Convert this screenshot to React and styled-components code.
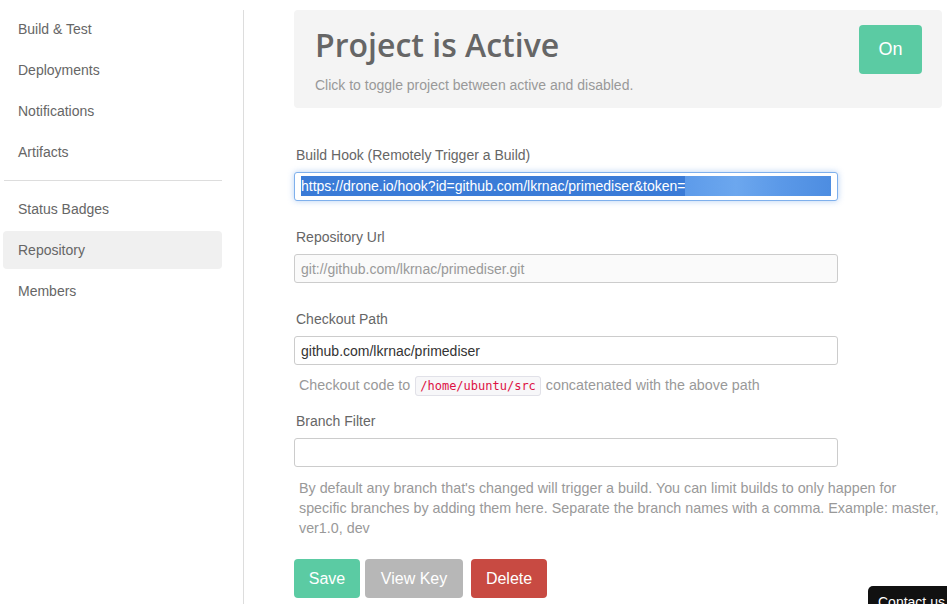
import React from "react";
import styled, { createGlobalStyle } from "styled-components";

const Global = createGlobalStyle`
  html, body { margin: 0; padding: 0; background: #fff; }
  body {
    font-family: "Liberation Sans", Arial, sans-serif;
    font-size: 14px;
    color: #666;
    overflow: hidden;
  }
  * { box-sizing: border-box; }
`;

const Layout = styled.div`
  display: flex;
  align-items: stretch;
  min-height: 604px;
`;

const Sidebar = styled.nav`
  width: 244px;
  flex: none;
  padding: 10px 21px 0 3px;
  border-right: 1px solid #ddd;
  margin-top: 10px;
  margin-bottom: -40px;
  display: flex;
  flex-direction: column;
`;

const NavGroup = styled.ul`
  list-style: none;
  margin: 0;
  padding: 0;
  display: flex;
  flex-direction: column;
  gap: 3px;
`;

const NavItem = styled.li`
  height: 38px;
  line-height: 38px;
  padding-left: 15px;
  border-radius: 4px;
  font-size: 14px;
  color: #666;
  margin-top: ${(p) => (p.$first ? "-10px" : "0")};
  background: ${(p) => (p.$active ? "#f0f0f0" : "transparent")};
`;

const Divider = styled.hr`
  border: 0;
  border-top: 1px solid #ddd;
  margin: 9px 0 9px 1px;
`;

const Main = styled.main`
  flex: 1;
  padding: 10px 5px 0 50px;
  display: flex;
  flex-direction: column;
`;

const Banner = styled.section`
  background: #f4f4f4;
  border-radius: 4px;
  height: 98px;
  padding: 15px 20px 0 21px;
  display: flex;
  justify-content: space-between;
  align-items: flex-start;
`;

const BannerText = styled.div`
  display: flex;
  flex-direction: column;
`;

const Title = styled.h1`
  margin: 0;
  font-family: "Open Sans", sans-serif;
  font-weight: 600;
  font-size: 32px;
  line-height: 40px;
  color: #666;
`;

const Subtitle = styled.p`
  margin: 12px 0 0;
  font-size: 14px;
  color: #999;
`;

const Toggle = styled.button`
  width: 63px;
  height: 49px;
  border: 0;
  border-radius: 4px;
  background: #5bcba3;
  color: #fff;
  font-family: "Liberation Sans", Arial, sans-serif;
  font-size: 18px;
`;

const Form = styled.form`
  display: flex;
  flex-direction: column;
  margin-top: 38px;
`;

const Field = styled.div`
  display: flex;
  flex-direction: column;
  margin-bottom: ${(p) => p.$gap || "27px"};
`;

const Label = styled.label`
  font-size: 14px;
  color: #666;
  line-height: 16px;
  padding: 1px 0 0 2px;
  margin-bottom: 9px;
`;

const Input = styled.input`
  width: 544px;
  height: 29px;
  border: 1px solid #ccc;
  border-radius: 3px;
  padding: 0 6px;
  font-family: "Liberation Sans", Arial, sans-serif;
  font-size: 14px;
  color: #333;
  background: ${(p) => (p.disabled ? "#fafafa" : "#fff")};
  &:disabled { color: #999; }
  outline: none;
`;

const FocusedBox = styled.div`
  width: 544px;
  height: 29px;
  border: 1px solid #7fb0ec;
  border-radius: 3px;
  padding: 3px 6px 0;
  box-shadow: 0 0 6px rgba(90, 150, 230, 0.45);
  background: #fff;
  font-size: 14px;
  white-space: nowrap;
  overflow: hidden;
  display: flex;
`;

const Selected = styled.span`
  display: inline-block;
  height: 20px;
  line-height: 20px;
  background: #3a7bd7;
  color: #fff;
`;

/* token value, kept unreadable */
const Masked = styled.span`
  flex: 1;
  height: 20px;
  background: linear-gradient(90deg, #5d9bea, #6ca7ee 35%, #5b99e8 65%, #4d8de1);
  filter: blur(0.6px);
`;

const Help = styled.p`
  margin: ${(p) => p.$mt || "11px"} 0 0;
  padding-left: 5px;
  font-size: 14.3px;
  line-height: 20px;
  color: #999;
`;

const Code = styled.code`
  font-family: "DejaVu Sans Mono", "Liberation Mono", monospace;
  font-size: 12px;
  color: #d14;
  background: #f7f7f9;
  border: 1px solid #e1e1e8;
  border-radius: 3px;
  padding: 2px 4px;
  margin: 0 1px;
`;

const Actions = styled.div`
  display: flex;
`;

const Button = styled.button`
  height: 39px;
  width: ${(p) => p.$w};
  padding: 0;
  margin-left: ${(p) => p.$offset || "0"};
  border: 0;
  border-radius: 4px;
  background: ${(p) => p.$bg};
  color: #fff;
  font-family: "Liberation Sans", Arial, sans-serif;
  font-size: 16px;
`;

const Contact = styled.div`
  position: fixed;
  left: 868px;
  top: 586px;
  width: 110px;
  height: 40px;
  background: #111;
  color: #fff;
  border-radius: 5px;
  padding: 8px 10px;
  font-size: 14px;
  line-height: 16px;
`;

export default function App() {
  return (
    <>
      <Global />
      <Layout>
        <Sidebar>
          <NavGroup>
            <NavItem $first>Build &amp; Test</NavItem>
            <NavItem>Deployments</NavItem>
            <NavItem>Notifications</NavItem>
            <NavItem>Artifacts</NavItem>
          </NavGroup>
          <Divider />
          <NavGroup>
            <NavItem>Status Badges</NavItem>
            <NavItem $active>Repository</NavItem>
            <NavItem>Members</NavItem>
          </NavGroup>
        </Sidebar>
        <Main>
          <Banner>
            <BannerText>
              <Title>Project is Active</Title>
              <Subtitle>Click to toggle project between active and disabled.</Subtitle>
            </BannerText>
            <Toggle type="button">On</Toggle>
          </Banner>
          <Form>
            <Field>
              <Label>Build Hook (Remotely Trigger a Build)</Label>
              <FocusedBox>
                <Selected>https://drone.io/hook?id=github.com/lkrnac/primediser&amp;token=</Selected>
                <Masked />
              </FocusedBox>
            </Field>
            <Field>
              <Label>Repository Url</Label>
              <Input disabled value="git://github.com/lkrnac/primediser.git" readOnly />
            </Field>
            <Field $gap="16px">
              <Label>Checkout Path</Label>
              <Input value="github.com/lkrnac/primediser" readOnly />
              <Help $mt="10px">
                Checkout code to <Code>/home/ubuntu/src</Code> concatenated with the above path
              </Help>
            </Field>
            <Field $gap="21px">
              <Label>Branch Filter</Label>
              <Input value="" readOnly />
              <Help>
                By default any branch that's changed will trigger a build. You can limit builds to only
                happen for specific branches by adding them here. Separate the branch names with a
                comma. Example: master, ver1.0, dev
              </Help>
            </Field>
            <Actions>
              <Button type="button" $bg="#5bcba3" $w="66px">Save</Button>
              <Button type="button" $bg="#b7b7b7" $w="98px" $offset="5px">View Key</Button>
              <Button type="button" $bg="#c84a42" $w="76px" $offset="8px">Delete</Button>
            </Actions>
          </Form>
        </Main>
      </Layout>
      <Contact>Contact us</Contact>
    </>
  );
}
